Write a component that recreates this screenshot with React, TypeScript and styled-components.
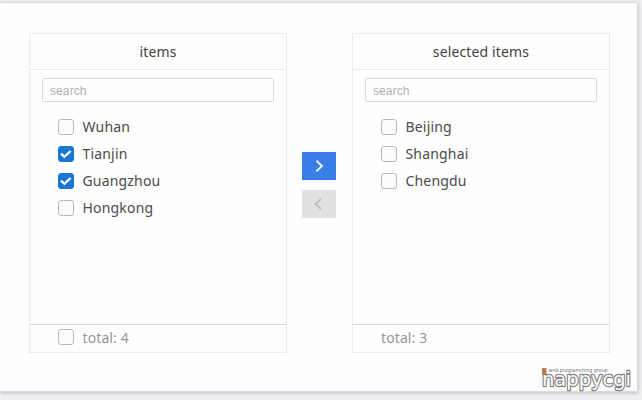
import React, { useState } from 'react';
import styled, { createGlobalStyle } from 'styled-components';

const GlobalStyle = createGlobalStyle`
  * { box-sizing: border-box; }
  body {
    margin: 0;
    background: #f0f0f3;
    font-family: "Noto Sans", "Liberation Sans", sans-serif;
    overflow: hidden;
  }
`;

const Page = styled.main`
  width: 642px;
  height: 400px;
  padding-top: 2px;
  overflow: hidden;
`;

const Card = styled.section`
  position: relative;
  width: 638px;
  height: 390px;
  padding: 30px 0 0 29px;
  background: #fefefe;
  border: 1px solid #dadadc;
  border-left: 0;
  box-shadow: 0 1px 4px rgba(60, 60, 70, 0.28);
`;

const Transfer = styled.div`
  display: flex;
`;

const Panel = styled.div`
  display: flex;
  flex-direction: column;
  width: 258px;
  height: 320px;
  border: 1px solid #ebebeb;
`;

const PanelHeader = styled.header`
  height: 36px;
  line-height: 35px;
  border-bottom: 1px solid #e9e9e9;
  text-align: center;
  font-size: 14px;
  letter-spacing: 0.14px;
  color: #424242;
`;

const Search = styled.input`
  width: 232px;
  height: 24px;
  margin: 8px 12px 0;
  padding: 1px 7px 0;
  border: 1px solid #d9d9d9;
  border-radius: 2px;
  background: #fefefe;
  font: 12px/20px "Liberation Sans", Arial, sans-serif;
  letter-spacing: 0.1px;
  outline: none;
  &::placeholder { color: #b0b0b0; opacity: 1; }
`;

const List = styled.ul`
  flex: 1;
  margin: 0;
  padding: 11px 0 0 28px;
  list-style: none;
`;

const Row = styled.li`
  display: flex;
  align-items: center;
  height: 27px;
  cursor: pointer;
`;

const Box = styled.span<{ $checked?: boolean }>`
  display: grid;
  place-items: center;
  flex: none;
  width: 16px;
  height: 16px;
  margin-right: 8.5px;
  border: 1px solid ${(p) => (p.$checked ? '#1976d2' : '#b9b9b9')};
  border-radius: 3px;
  background: ${(p) => (p.$checked ? '#1976d2' : '#fcfcfc')};
`;

const Label = styled.span`
  font-size: 14px;
  line-height: 27px;
  letter-spacing: 0.18px;
  color: #4a4a4a;
`;

const Footer = styled.footer`
  display: flex;
  align-items: center;
  height: 28px;
  padding: 0 0 3px 28px;
  border-top: 1px solid #d8d8d8;
`;

const Total = styled.span`
  padding-top: 2px;
  font-size: 14px;
  line-height: 22px;
  letter-spacing: 0.1px;
  color: #969696;
`;

const Actions = styled.div`
  display: flex;
  flex-direction: column;
  gap: 10px;
  margin: 119px 16px 0 15px;
`;

const MoveButton = styled.button`
  display: grid;
  place-items: center;
  width: 34px;
  height: 28px;
  padding: 0;
  border: 0;
  background: #387ee6;
  color: #f4f8ff;
  &:disabled { background: #e0e0e0; color: #bdbdbd; }
`;

const Watermark = styled.svg`
  position: absolute;
  left: 540px;
  top: 362px;
`;

const CheckBox = ({ checked }: { checked?: boolean }) => (
  <Box $checked={checked}>
    {checked && (
      <svg width="14" height="14" viewBox="0 0 14 14" fill="none">
        <path d="M2 6.6 5.4 9.8 11.6 4" stroke="#fff" strokeWidth="2.2" />
      </svg>
    )}
  </Box>
);

const source = ['Wuhan', 'Tianjin', 'Guangzhou', 'Hongkong'];
const target = ['Beijing', 'Shanghai', 'Chengdu'];

type ListPanelProps = {
  title: string;
  cities: string[];
  selected: string[];
  onToggle: (name: string) => void;
  selectAll?: boolean;
};

const ListPanel = ({ title, cities, selected, onToggle, selectAll }: ListPanelProps) => (
  <Panel>
    <PanelHeader>{title}</PanelHeader>
    <Search placeholder="search" />
    <List>
      {cities.map((name) => (
        <Row key={name} onClick={() => onToggle(name)}>
          <CheckBox checked={selected.includes(name)} />
          <Label>{name}</Label>
        </Row>
      ))}
    </List>
    <Footer>
      {selectAll && <CheckBox />}
      <Total>total: {cities.length}</Total>
    </Footer>
  </Panel>
);

export default function App() {
  const [selected, setSelected] = useState(['Tianjin', 'Guangzhou']);
  const toggle = (name: string) =>
    setSelected((s) => (s.includes(name) ? s.filter((n) => n !== name) : [...s, name]));

  return (
    <Page>
      <GlobalStyle />
      <Card>
        <Transfer>
          <ListPanel title="items" cities={source} selected={selected} onToggle={toggle} selectAll />
          <Actions>
            <MoveButton aria-label="Move right">
              <svg width="12" height="14" viewBox="0 0 12 14" fill="none">
                <path d="M3.4 1.6 9 7 3.4 12.4" stroke="currentColor" strokeWidth="1.9" />
              </svg>
            </MoveButton>
            <MoveButton aria-label="Move left" disabled>
              <svg width="12" height="14" viewBox="0 0 12 14" fill="none">
                <path d="M8.2 1.6 2.6 7 8.2 12.4" stroke="currentColor" strokeWidth="1.9" />
              </svg>
            </MoveButton>
          </Actions>
          <ListPanel title="selected items" cities={target} selected={selected} onToggle={toggle} />
        </Transfer>
        <Watermark width="95" height="28" viewBox="0 0 95 28">
          <rect x="2" y="3" width="4.5" height="7" fill="#bd7a55" />
          <text x="8.5" y="6.8" fontFamily="DejaVu Sans" fontSize="5.5" fill="#777" textLength="59" lengthAdjust="spacingAndGlyphs">web programming group</text>
          <text x="2" y="21.3" fontFamily="DejaVu Sans" fontSize="20" fill="#fff" stroke="#808080" strokeWidth="2.4" strokeLinejoin="round" paintOrder="stroke" textLength="89" lengthAdjust="spacingAndGlyphs">nappycgi</text>
        </Watermark>
      </Card>
    </Page>
  );
}
